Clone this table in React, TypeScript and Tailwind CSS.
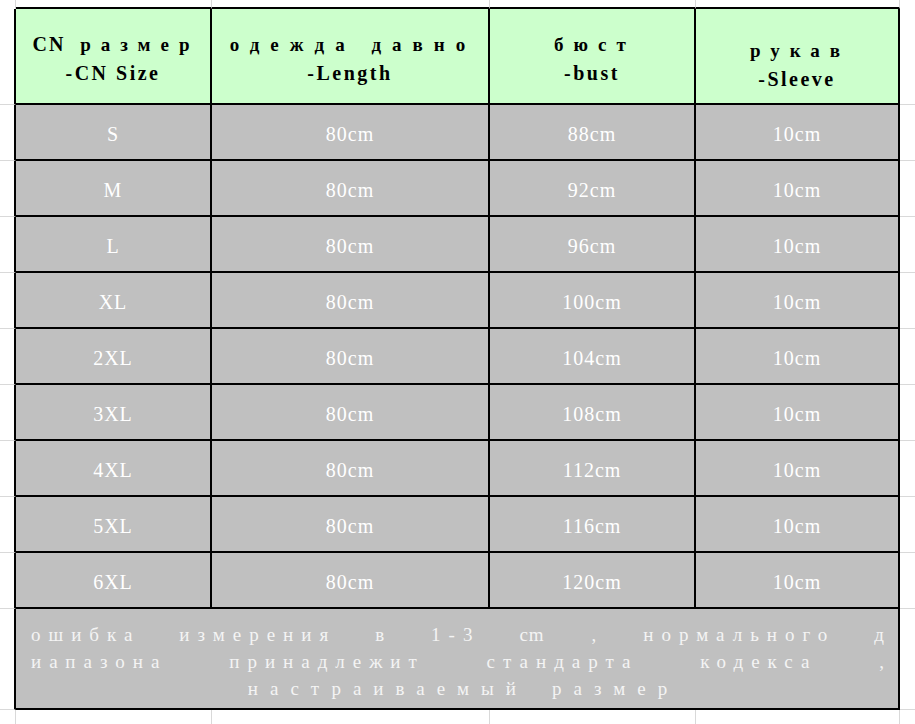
const rows = [
  ["S", "80cm", "88cm", "10cm"],
  ["M", "80cm", "92cm", "10cm"],
  ["L", "80cm", "96cm", "10cm"],
  ["XL", "80cm", "100cm", "10cm"],
  ["2XL", "80cm", "104cm", "10cm"],
  ["3XL", "80cm", "108cm", "10cm"],
  ["4XL", "80cm", "112cm", "10cm"],
  ["5XL", "80cm", "116cm", "10cm"],
  ["6XL", "80cm", "120cm", "10cm"],
];

const headers = [
  { lead: "CN", ru: " размер", en: "-CN Size", pad: "pt-[4px]", ls: "tracking-[10px]" },
  { lead: "", ru: "одежда давно", en: "-Length", pad: "pt-[4px]", ls: "tracking-[11px]" },
  { lead: "", ru: "бюст", en: "-bust", pad: "pt-[4px]", ls: "tracking-[10px]" },
  { lead: "", ru: "рукав", en: "-Sleeve", pad: "pt-[17px]", ls: "tracking-[10px]" },
];

const line1 = ["ошибка", "измерения", "в", "1-3", "cm", ",", "нормального", "д"];
const line2 = ["иапазона", "принадлежит", "стандарта", "кодекса", ","];

function Margin({ edge }: { edge?: boolean }) {
  return (
    <div
      className={
        edge
          ? "border-r-2 border-b border-r-black border-b-[#d9d9d9]"
          : "border-b border-[#d9d9d9]"
      }
    />
  );
}

export default function App() {
  return (
    <div className="w-[915px] h-[724px] bg-white overflow-hidden grid grid-cols-[16px_196px_278px_206px_204px_15px] grid-rows-[9px_96px_repeat(9,56px)_101px_14px]">
      {/* top strip of the sheet */}
      <div className="border-r border-[#d9d9d9]" />
      {[0, 1, 2, 3].map((i) => (
        <div key={i} className="border-r border-b-2 border-r-[#d9d9d9] border-b-black" />
      ))}
      <div />

      {/* header row */}
      <Margin edge />
      {headers.map((h, i) => (
        <div
          key={i}
          className={`bg-[#ccffcc] border-r-2 border-b-2 border-black flex flex-col items-center justify-center leading-[28px] text-[20px] font-bold text-black font-['Liberation_Serif',serif] ${h.pad}`}
        >
          <div className="whitespace-pre tracking-[2px] pl-[6px]">
            {h.lead}
            <span className={`text-[19px] ${h.ls}`}>{h.ru}</span>
          </div>
          <div className="whitespace-pre tracking-[2.5px]">{h.en}</div>
        </div>
      ))}
      <Margin />

      {/* size rows */}
      {rows.map((r) => (
        <div key={r[0]} className="contents">
          <Margin edge />
          {r.map((v, j) => (
            <div
              key={j}
              className="bg-[#c0c0c0] border-r-2 border-b-2 border-black flex items-center justify-center pt-[4px] tracking-[1px] text-white text-[20px] font-['Liberation_Serif',serif]"
            >
              {v}
            </div>
          ))}
          <Margin />
        </div>
      ))}

      {/* note row */}
      <Margin edge />
      <div className="col-span-4 bg-[#c0c0c0] border-r-2 border-b-2 border-black pl-[15px] pr-[6px] pt-[5px] flex flex-col justify-center text-[19px] leading-[27px] text-[#f4f4f4] font-['Liberation_Serif',serif]">
        <div className="flex justify-between">
          {line1.map((w, i) => (
            <span key={i} className={w === "cm" ? "tracking-[1px] pr-[8px]" : "tracking-[8px]"}>
              {w}
            </span>
          ))}
        </div>
        <div className="flex justify-between">
          {line2.map((w, i) => (
            <span key={i} className="tracking-[8px]">
              {w}
            </span>
          ))}
        </div>
        <div className="flex justify-center gap-[24px] pl-[4px]">
          <span className="tracking-[12px]">настраиваемый</span>
          <span className="tracking-[12px]">размер</span>
        </div>
      </div>
      <Margin />

      {/* bottom strip of the sheet */}
      <div className="border-r border-[#d9d9d9]" />
      {[0, 1, 2, 3].map((i) => (
        <div key={i} className="border-r border-[#d9d9d9]" />
      ))}
      <div />
    </div>
  );
}
